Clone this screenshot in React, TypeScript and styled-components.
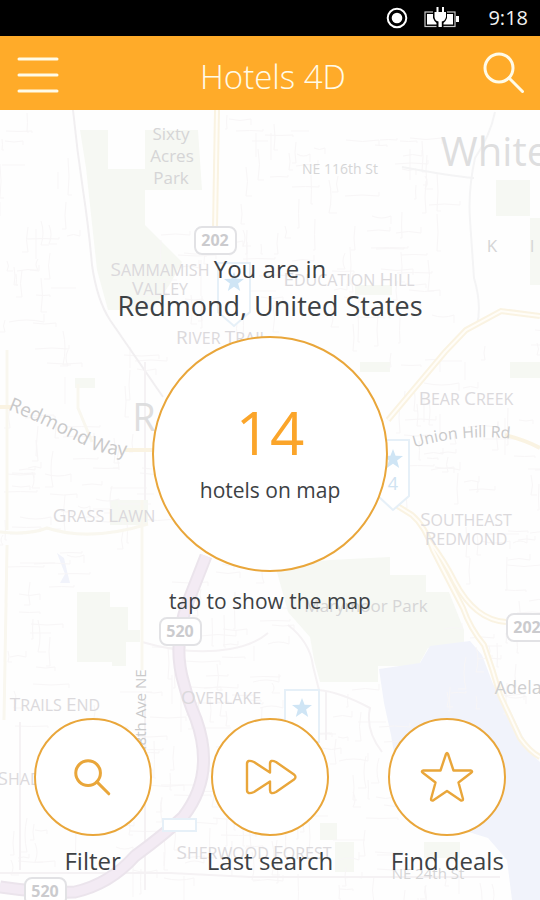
import React from "react";
import styled, { createGlobalStyle } from "styled-components";

const ORANGE = "#e9a63a";
const BRAND = "#ffab29";
const INK = "#3d4144";
const FONT = '"Open Sans", "Noto Sans", sans-serif';

const GlobalStyle = createGlobalStyle`
  * { box-sizing: border-box; }
  body { margin: 0; background: #fff; font-family: ${FONT}; }
  button { font: inherit; color: inherit; border: 0; background: none; padding: 0; cursor: pointer; }
`;

const Page = styled.div`
  min-height: 100vh;
  display: flex;
  flex-direction: column;
  color: ${INK};
`;

const StatusBar = styled.div`
  height: 36px;
  background: #000;
  color: #f2f2f2;
  display: flex;
  align-items: center;
  justify-content: flex-end;
  gap: 16px;
  padding-right: 12px;
  font-size: 20px;
  line-height: 36px;
`;

const Clock = styled.time`
  margin-left: 12px;
`;

const Header = styled.header`
  height: 74px;
  background: ${BRAND};
  color: #fffbe8;
  display: grid;
  grid-template-columns: 80px 1fr 80px;
  align-items: center;
`;

const HeaderButton = styled.button<{ $side: "start" | "end" }>`
  height: 74px;
  padding: 0 15px;
  display: flex;
  align-items: center;
  justify-content: flex-${(p) => p.$side};
`;

const Title = styled.h1`
  margin: 0;
  padding: 8px 0 0 6px;
  text-align: center;
  font-weight: 300;
  font-size: 33px;
  line-height: 44px;
`;

const Main = styled.main`
  flex: 1;
  position: relative;
  isolation: isolate;
  display: flex;
  flex-direction: column;
  align-items: center;
  justify-content: space-between;
  gap: 24px;
  padding: 141px 0 22px;
`;

const MapBackdrop = styled.svg`
  position: absolute;
  inset: 0;
  z-index: -1;
  width: 100%;
  height: 100%;
  display: block;
`;

const Hero = styled.section`
  display: flex;
  flex-direction: column;
  align-items: center;
`;

const Greeting = styled.p`
  margin: 0;
  font-size: 24px;
  line-height: 36px;
`;

const Place = styled.p`
  margin: 0 0 11px;
  text-align: center;
  font-size: 27px;
  line-height: 38px;
`;

const CountButton = styled.button`
  width: 236px;
  height: 236px;
  border: 2px solid ${ORANGE};
  border-radius: 50%;
  background: #fff;
  display: flex;
  flex-direction: column;
  align-items: center;
  justify-content: center;
  padding-bottom: 4px;
`;

const Count = styled.span`
  color: #fba52a;
  font-size: 60px;
  line-height: 72px;
  font-weight: 500;
`;

const CountCaption = styled.span`
  padding-top: 4px;
  font-size: 21px;
  line-height: 36px;
`;

const Hint = styled.p`
  margin: 13px 0 0;
  font-size: 21px;
  line-height: 32px;
`;

const Actions = styled.nav`
  width: 100%;
  padding: 0 4px;
  display: grid;
  grid-template-columns: repeat(3, 1fr);
`;

const ActionButton = styled.button`
  display: flex;
  flex-direction: column;
  align-items: center;
  gap: 8px;
  font-size: 24px;
  line-height: 34px;
`;

const ActionRing = styled.span`
  width: 118px;
  height: 118px;
  border: 2px solid ${ORANGE};
  border-radius: 50%;
  background: #fff;
  display: flex;
  align-items: center;
  justify-content: center;
`;

const LABEL = "#d5d5d6";

const MapText = styled.text<{ $size?: number; $tone?: string; $bold?: boolean }>`
  font-family: ${FONT};
  font-size: ${(p) => p.$size ?? 17}px;
  font-weight: ${(p) => (p.$bold ? 700 : 400)};
  fill: ${(p) => p.$tone ?? LABEL};
  text-anchor: middle;
`;

const Initial = styled.tspan`
  font-size: 19px;
`;

function District({ x, y, name }: { x: number; y: number; name: string }) {
  return (
    <MapText x={x} y={y} $size={16} $tone="#dbd9dc">
      {name.split(" ").map((word, i) => (
        <React.Fragment key={word}>
          {i > 0 && " "}
          <Initial>{word[0]}</Initial>
          {word.slice(1).toUpperCase()}
        </React.Fragment>
      ))}
    </MapText>
  );
}

type Block = [x: number, y: number, w: number, h: number];

const RESIDENTIAL: Block[] = [
  [0, 112, 70, 220], [225, 112, 215, 215], [0, 345, 145, 200], [390, 330, 150, 160],
  [5, 545, 70, 140], [148, 560, 130, 160], [10, 690, 190, 190], [205, 690, 180, 205],
  [440, 520, 100, 180], [135, 225, 70, 110], [400, 860, 100, 40],
];

const minorStreets = (() => {
  let seed = 17;
  const next = () => {
    seed = (seed * 16807) % 2147483647;
    return seed / 2147483647;
  };
  return RESIDENTIAL.map(([x, y, w, h]) => {
    const count = Math.round((w * h) / 520);
    let d = "";
    for (let i = 0; i < count; i += 1) {
      const sx = Math.round(x + next() * w);
      const sy = Math.round(y + next() * h);
      const len = Math.round(10 + next() * 28);
      const bend = Math.round(next() * 8 - 4);
      d += next() > 0.5
        ? `M${sx} ${sy}q${len / 2} ${bend} ${len} 0v${bend * 2}`
        : `M${sx} ${sy}q${bend} ${len / 2} 0 ${len}h${bend * 2}`;
    }
    return d;
  }).join("");
})();

function Shield({ x, y, label }: { x: number; y: number; label: string }) {
  return (
    <g>
      <rect x={x - 20} y={y - 13} width="41" height="27" rx="7" fill="#fff" stroke="#e2e2e5" strokeWidth="2" />
      <MapText x={x} y={y + 6} $size={16} $bold $tone="#cbcbce">{label}</MapText>
    </g>
  );
}

function Star({ x, y }: { x: number; y: number }) {
  return (
    <path
      transform={`translate(${x} ${y})`}
      d="M0-10 2.6-3.2 10-3 4.1 1.6 6.2 9 0 4.8-6.2 9-4.1 1.6-10-3-2.6-3.2Z"
      fill="#cfe5f5"
    />
  );
}

const HIGHWAY =
  "M206 556 188 602Q172 646 184 684 188 700 196 719 216 775 183 817 165 834 135 856 110 884 75 892 40 893 0 887";

function MapArt() {
  return (
    <MapBackdrop viewBox="0 110 540 790" preserveAspectRatio="xMidYMid slice" aria-hidden="true">
      <defs>
        <path id="redmond-way" d="M6 409C40 422 62 434 82 444Q104 458 150 456" />
        <path id="union-hill" d="M413 448Q465 432 520 440" />
      </defs>
      <rect y="110" width="540" height="790" fill="#fefefe" />
      <g fill="#f6f8f3">
        <path d="M80 130H108V169H145V225L182 262L170 284L152 310H108L97 270 86 168Z" />
        <path d="M145 130H198L202 190H145Z" />
        <path d="M77 592H110V607H128V630H140V642H126V666H112V662H77Z" />
        <path d="M275 565 330 560 390 557 390 575H426V592H449L464 630V644L428 648 418 666H378V682H320L314 660 310 637 288 612Z" />
        <path d="M496 180H530V216H496ZM530 218H540V285H530ZM510 362H540V378H510ZM360 362H390V372H360ZM75 378H95V388H75ZM335 842H354V872H335ZM320 823H337V840H320ZM424 842H460V858H424ZM110 500H148V525H110ZM355 285H392V295H355Z" />
      </g>
      <g fill="#f1f3fb">
        <path d="M379 669 420 663 430 646 470 641 482 655 493 684 511 712 522 735 533 755 540 762V900H512L507 860 488 838 430 820 400 790 391 735 384 703Z" />
        <path d="M57 553 64 558 67 571 70 583H60L65 574Z" />
      </g>
      <path d={minorStreets} fill="none" stroke="#f8f6f7" strokeWidth="1" />
      <g fill="none" stroke="#f1eff1" strokeWidth="2">
        <path d="M73 110Q77 150 83 190T92 265Q97 300 110 320L163 397" />
        <path d="M495 112Q490 136 475 158 468 190 470 220T474 278Q482 305 477 325M402 167Q450 176 474 178" stroke="#f4f4f5" />
        <path d="M142 642Q190 656 230 649 254 645 268 633M288 625Q310 642 313 666L319 690Q340 692 370 708 365 730 382 752M326 692V740" stroke="#f5f2f4" />
        <path d="M0 873H170L250 877H500M20 722V870M145 700V890M145 362V500" stroke="#f5f2f4" />
      </g>
      <g fill="none" stroke="#f9f7ef" strokeWidth="3">
        <path d="M7 350V530M7 545 4 720M142 500V670M0 532Q30 535 47 528 90 542 148 524M78 384V408L92 442" />
      </g>
      <g fill="none" stroke="#faf3e2" strokeWidth="6">
        <path d="M217 110 215 228" />
        <path d="M540 316 501 311 466 330 445 352 388 420" />
        <path d="M388 500 412 515Q425 526 433 550L463 608Q470 628 484 645 493 670 500 695L520 738Q530 752 540 757" />
        <path d="M430 542Q444 560 455 582 475 620 506 622" />
        <path d="M505 435Q525 440 540 448M0 407H12M125 450H154" strokeWidth="4" />
      </g>
      <path
        d="M217 110 215 228M540 316 501 311 466 330 445 352 388 420M388 500 412 515Q425 526 433 550L463 608Q470 628 484 645 493 670 500 695L520 738Q530 752 540 757M430 542Q444 560 455 582 475 620 506 622"
        fill="none"
        stroke="#fffdf8"
        strokeWidth="2"
      />
      <g fill="none">
        <path d={HIGHWAY} stroke="#ebe4ec" strokeWidth="13" />
        <path d={HIGHWAY} stroke="#f3ebf4" strokeWidth="9" />
      </g>
      <g fill="#fff" stroke="#e6f0f8" strokeWidth="2">
        <path d="M218 263H250V312L234 326 218 312Z" />
        <path d="M378 440H409V496L393 510 378 496Z" />
        <rect x="285" y="690" width="34" height="52" />
        <path d="M163 819H196V831H163Z" />
      </g>
      <Star x={234} y={282} />
      <Star x={393} y={459} />
      <Star x={302} y={708} />
      <MapText x="393" y="490" $size={18} $tone="#d0e3f2">4</MapText>
      <Shield x={215} y={240} label="202" />
      <Shield x={180} y={631} label="520" />
      <Shield x={45} y={891} label="520" />
      <Shield x={527} y={627} label="202" />
      <MapText x="171" y="140">Sixty</MapText>
      <MapText x="172" y="162">Acres</MapText>
      <MapText x="171" y="184">Park</MapText>
      <MapText x="340" y="174" $size={14}>NE 116th St</MapText>
      <MapText x="495" y="166" $size={40} $tone="#dededf">White</MapText>
      <MapText x="492" y="252">K</MapText>
      <MapText x="532" y="252">I</MapText>
      <District x={160} y={276} name="Sammamish" />
      <District x={160} y={295} name="Valley" />
      <District x={349} y={286} name="Education Hill" />
      <District x={222} y={344} name="River Trail" />
      <MapText x="144" y="431" $size={38} $tone="#dededf">R</MapText>
      <District x={466} y={405} name="Bear Creek" />
      <District x={466} y={526} name="Southeast" />
      <District x={466} y={545} name="Redmond" />
      <District x={104} y={522} name="Grass Lawn" />
      <MapText x="366" y="612" $size={17}>Marymoor Park</MapText>
      <District x={55} y={711} name="Trails End" />
      <District x={221} y={704} name="Overlake" />
      <MapText x="531" y="694" $size={18} $tone="#cfcfd0">Adelaide</MapText>
      <District x={24} y={785} name="Shade" />
      <District x={254} y={859} name="Sherwood Forest" />
      <MapText x="428" y="879" $size={15}>NE 24th St</MapText>
      <MapText transform="translate(146 716) rotate(-90)" $size={15} $tone="#c9c9ca">148th Ave NE</MapText>
      <MapText $size={19} $tone="#c9c9ca">
        <textPath href="#redmond-way" startOffset="43%">Redmond Way</textPath>
      </MapText>
      <MapText $size={16} $tone="#c9c9ca">
        <textPath href="#union-hill" startOffset="46%">Union Hill Rd</textPath>
      </MapText>
    </MapBackdrop>
  );
}

const RecordIcon = () => (
  <svg width="22" height="22" viewBox="0 0 22 22" aria-hidden="true">
    <circle cx="11" cy="11" r="9.3" fill="none" stroke="#fff" strokeWidth="2" />
    <circle cx="11" cy="11" r="5.3" fill="#fff" />
  </svg>
);

const ChargingIcon = () => (
  <svg width="36" height="24" viewBox="0 0 36 24" aria-hidden="true">
    <rect x="1" y="6" width="30" height="14.5" fill="none" stroke="#c8c8c8" strokeWidth="1.2" />
    <rect x="3" y="8" width="26" height="10.5" fill="#fff" />
    <rect x="32" y="10" width="3" height="6" fill="#fff" />
    <path d="M9 5H23V12Q22 15 19.500 17V22H12.500V17Q10 15 9 12Z" fill="#000" />
    <path d="M12.5 1H14.5V6H18V1H20V6H22V11Q21 15 17.8 15.5V21H14.5V15.5Q11 15 10.5 11V6H12.5Z" fill="#fff" />
  </svg>
);

const MenuIcon = () => (
  <svg width="46" height="40" viewBox="0 0 46 40" fill="none" stroke="currentColor" strokeWidth="3" strokeLinecap="round" aria-hidden="true">
    <path d="M4 6H42M4 22H42M4 38H42" />
  </svg>
);

const SearchIcon = ({ size, weight }: { size: number; weight: number }) => (
  <svg width={size} height={size} viewBox="0 0 42 42" fill="none" stroke="currentColor" strokeWidth={weight} strokeLinecap="round" aria-hidden="true">
    <circle cx="16" cy="16" r="14" />
    <path d="M26 26 39.5 39.5" />
  </svg>
);

const ForwardIcon = () => (
  <svg width="56" height="36" viewBox="0 0 56 36" fill="none" stroke={ORANGE} strokeWidth="2.4" strokeLinejoin="round" aria-hidden="true">
    <path d="M28 13.500 12 3Q5 0 5 5V31Q5 36 12 33L28 22.500V31Q28 36 34 33L52 20.500Q55 18 52 15.500L34 3Q28 0 28 5Z" />
  </svg>
);

const StarIcon = () => (
  <svg width="54" height="52" viewBox="0 0 54 52" fill="none" stroke={ORANGE} strokeWidth="2.4" strokeLinejoin="round" aria-hidden="true">
    <path d="M26 3Q27 1 28 3L33.500 19.500H50.500Q53 20 51.500 21.500L38.500 31.500 43 48Q43 50 41 49.500L27 40 13 49.500Q11 50 11 48L15.500 31.500 2.500 21.500Q1 20 3.500 19.500H20.500Z" />
  </svg>
);

const FilterGlyph = styled.span`
  display: flex;
  color: ${ORANGE};
`;

const actions = [
  { label: "Filter", icon: <FilterGlyph><SearchIcon size={37} weight={3.4} /></FilterGlyph> },
  { label: "Last search", icon: <ForwardIcon /> },
  { label: "Find deals", icon: <StarIcon /> },
];

export default function App() {
  return (
    <Page>
      <GlobalStyle />
      <StatusBar>
        <RecordIcon />
        <ChargingIcon />
        <Clock>9:18</Clock>
      </StatusBar>
      <Header>
        <HeaderButton $side="start" aria-label="Menu"><MenuIcon /></HeaderButton>
        <Title>Hotels 4D</Title>
        <HeaderButton $side="end" aria-label="Search"><SearchIcon size={42} weight={3} /></HeaderButton>
      </Header>
      <Main>
        <MapArt />
        <Hero>
          <Greeting>You are in</Greeting>
          <Place>Redmond, United States</Place>
          <CountButton>
            <Count>14</Count>
            <CountCaption>hotels on map</CountCaption>
          </CountButton>
          <Hint>tap to show the map</Hint>
        </Hero>
        <Actions aria-label="Quick actions">
          {actions.map(({ label, icon }) => (
            <ActionButton key={label}>
              <ActionRing>{icon}</ActionRing>
              {label}
            </ActionButton>
          ))}
        </Actions>
      </Main>
    </Page>
  );
}
